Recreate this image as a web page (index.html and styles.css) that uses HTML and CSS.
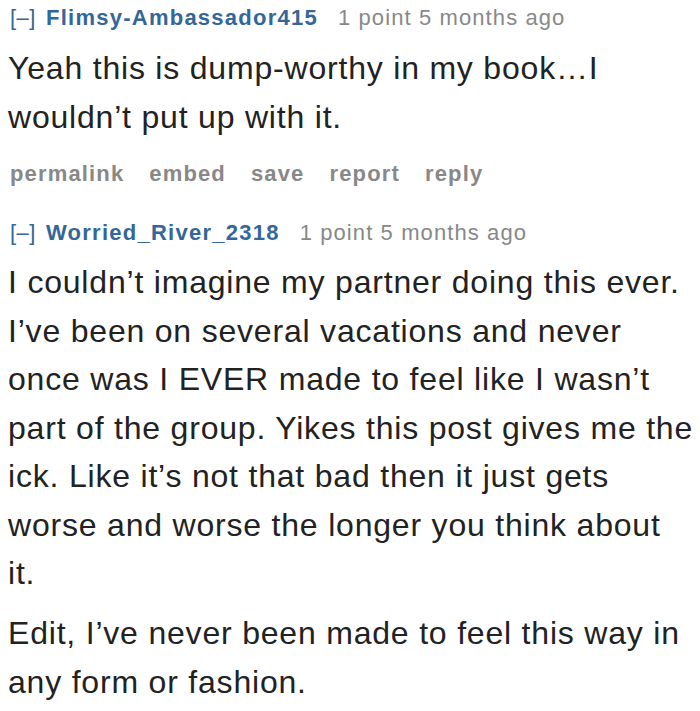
FILE: index.html
```html
<!DOCTYPE html>
<html>
<head>
<meta charset="utf-8">
<link rel="stylesheet" href="styles.css">
</head>
<body>
<div class="comment first">
  <p class="tagline"><span class="expand">[–]</span><span class="author">Flimsy-Ambassador415</span><span class="meta">1 point 5 months ago</span></p>
  <div class="md">
    <p>Yeah this is dump-worthy in my book…I wouldn’t put up with it.</p>
  </div>
  <ul class="buttons">
    <li>permalink</li>
    <li>embed</li>
    <li>save</li>
    <li>report</li>
    <li>reply</li>
  </ul>
</div>
<div class="comment second">
  <p class="tagline"><span class="expand">[–]</span><span class="author">Worried_River_2318</span><span class="meta">1 point 5 months ago</span></p>
  <div class="md">
    <p>I couldn’t imagine my partner doing this ever. I’ve been on several vacations and never once was I EVER made to feel like I wasn’t part of the group. Yikes this post gives me the ick. Like it’s not that bad then it just gets worse and worse the longer you think about<br>it.</p>
    <p>Edit, I’ve never been made to feel this way in any form or fashion.</p>
  </div>
</div>
</body>
</html>
```

FILE: styles.css
```css
html, body {
  margin: 0;
  padding: 0;
  background: #fff;
}
body {
  padding: 3px 0 0 8px;
  font-family: "Liberation Sans", Arial, sans-serif;
  color: #222;
}
.comment {
  display: flex;
  flex-direction: column;
}
.tagline {
  margin: 0;
  font-size: 22px;
  line-height: 30px;
  color: #888;
  white-space: nowrap;
  padding-left: 2px;
  letter-spacing: 1.1px;
}
.expand {
  color: #369;
  margin-right: 10px;
  letter-spacing: 0.5px;
}
.author {
  color: #369;
  font-weight: bold;
  letter-spacing: 1.25px;
  margin-right: 20px;
}
.md {
  font-size: 32px;
  line-height: 48.5px;
  letter-spacing: 0.8px;
  color: #222;
}
.md p {
  margin: 0;
}
.md p + p {
  margin-top: 11.5px;
}
.first .md {
  margin-top: 11px;
}
.buttons {
  list-style: none;
  margin: 18px 0 0 0;
  padding: 0 0 0 2px;
  display: flex;
  gap: 25px;
  font-size: 22px;
  line-height: 30px;
  font-weight: bold;
  letter-spacing: 1.15px;
  color: #888;
}
.second {
  margin-top: 29px;
}
.second .md {
  margin-top: 10px;
}
```
